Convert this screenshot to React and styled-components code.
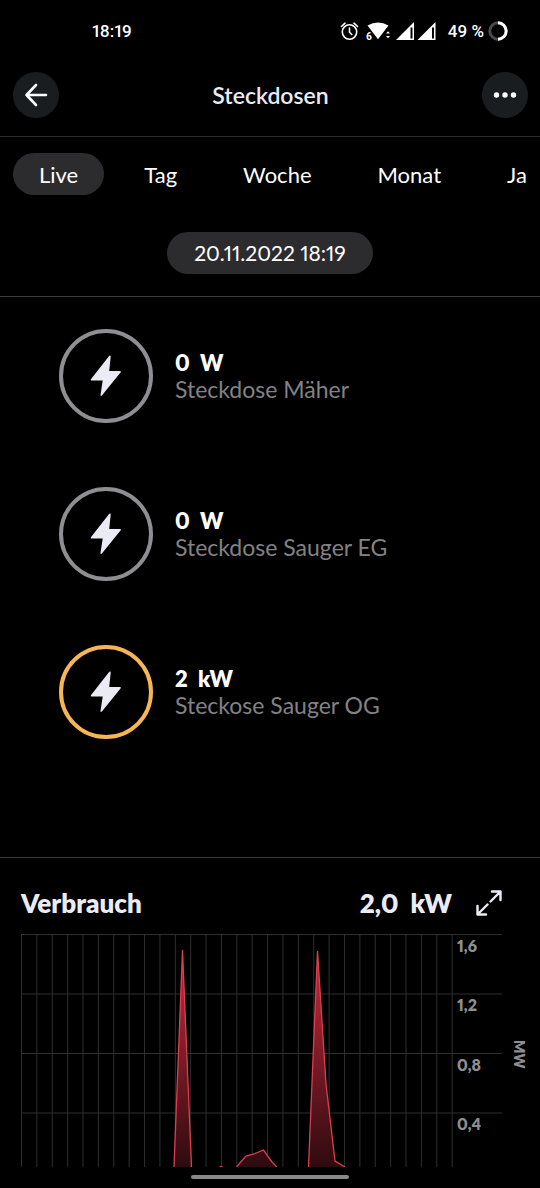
import React, { useState } from 'react';
import styled, { createGlobalStyle } from 'styled-components';

const GlobalStyle = createGlobalStyle`
  * {
    box-sizing: border-box;
  }
  body {
    margin: 0;
    background: #000;
    color: #fff;
    font-family: Lato, 'Liberation Sans', sans-serif;
    font-variant-numeric: proportional-nums;
  }
  button {
    font: inherit;
    font-variant-numeric: inherit;
    color: inherit;
    border: 0;
    padding: 0;
    background: none;
    cursor: pointer;
  }
`;

/**
 * Page
 */

const Page = styled.div`
  display: flex;
  flex-direction: column;
  min-height: 100vh;
  background: #000;
`;

const StatusBar = styled.div`
  display: flex;
  justify-content: space-between;
  align-items: center;
  height: 60px;
  padding: 1px 32px 0 92px;
  font-family: Roboto, sans-serif;
  font-size: 17px;
  font-weight: 500;
`;

const StatusIcons = styled.div`
  display: flex;
  align-items: center;
`;

const Battery = styled.span`
  margin: 0 4px 0 12px;
  white-space: nowrap;
`;

/**
 * Header
 */

const Header = styled.header`
  display: flex;
  align-items: center;
  justify-content: space-between;
  height: 77px;
  padding: 0 12px 6px 13px;
  border-bottom: 1px solid #2c2c2e;
`;

const RoundButton = styled.button`
  display: flex;
  align-items: center;
  justify-content: center;
  width: 46px;
  height: 46px;
  border-radius: 50%;
  background: #1a1d20;
`;

const Title = styled.h1`
  margin: 0;
  font-size: 23px;
  font-weight: 600;
  line-height: 28px;
  color: #ebebf5;
`;

/**
 * Range
 */

const Tabs = styled.nav`
  display: flex;
  gap: 14px;
  margin: 16px 12px 0 13px;
  overflow: hidden;
`;

const Tab = styled.button`
  flex: none;
  height: 42px;
  padding: 0 26px;
  border-radius: 21px;
  font-size: 22px;
  background: ${({ $active }) => ($active ? '#2c2c2e' : 'transparent')};
`;

const DateRow = styled.div`
  display: flex;
  justify-content: center;
  padding: 37px 0 22px;
  border-bottom: 1px solid #3a3a3c;
`;

const DateButton = styled.button`
  height: 42px;
  padding: 0 27px 1px;
  border-radius: 21px;
  font-size: 21px;
  background: #2c2c2e;
`;

/**
 * Sockets
 */

const SocketList = styled.ul`
  display: flex;
  flex-direction: column;
  gap: 64px;
  margin: 0;
  padding: 32px 20px 118px 59px;
  list-style: none;
  border-bottom: 1px solid #3a3a3c;
`;

const Socket = styled.li`
  display: flex;
  align-items: center;
  gap: 22px;
`;

const Ring = styled.div`
  display: flex;
  align-items: center;
  justify-content: center;
  width: 94px;
  height: 94px;
  border: 4px solid ${({ $on }) => ($on ? '#f7b555' : '#8e8e93')};
  border-radius: 50%;
`;

const Power = styled.div`
  font-size: 22px;
  font-weight: 800;
  line-height: 27px;
  white-space: pre;
`;

const SocketName = styled.div`
  font-size: 23px;
  line-height: 27px;
  color: #828285;
`;

/**
 * Consumption
 */

const Consumption = styled.section`
  padding: 27px 12px 0 21px;
`;

const ConsumptionHead = styled.div`
  display: flex;
  align-items: center;
  padding-right: 26px;
  color: #ebebf5;
  font-size: 26px;
  font-weight: 800;
  line-height: 36px;
`;

const ConsumptionTitle = styled.h2`
  flex: 1;
  margin: 0;
  font: inherit;
`;

const Total = styled.span`
  white-space: pre;
`;

const ExpandButton = styled.button`
  display: flex;
  margin-left: 24px;
`;

const Chart = styled.svg`
  display: block;
  width: 100%;
  margin-top: 13px;
`;

const AxisText = styled.text`
  fill: #8e8e93;
  font-family: Lato, 'Liberation Sans', sans-serif;
  font-size: ${({ $small }) => ($small ? 14 : 16)}px;
  font-weight: 800;
`;

const HomeBar = styled.div`
  width: 158px;
  height: 4px;
  margin: 8px auto 0;
  border-radius: 2px;
  background: #888;
`;

const ranges = ['Live', 'Tag', 'Woche', 'Monat', 'Ja'];

const sockets = [
  { name: 'Steckdose Mäher', power: '0  W', on: false },
  { name: 'Steckdose Sauger EG', power: '0  W', on: false },
  { name: 'Steckose Sauger OG', power: '2  kW', on: true },
];

const axis = [
  { y: 0.5, label: '1,6' },
  { y: 60, label: '1,2' },
  { y: 119.5, label: '0,8' },
  { y: 179, label: '0,4' },
];

const curves = [
  '153,233 161.5,16 170.5,233',
  '197,234 200,232.5 203,234',
  '215.5,233 225,222 233,220 242.5,216 251,228 256,233',
  '287.5,233 296.5,17 305,150 314,227 324,233',
];

function SystemIcons() {
  return (
    <svg width="96" height="22" viewBox="0 0 96 22" fill="#fff">
      <g fill="none" stroke="#fff" strokeWidth="1.6" strokeLinecap="round">
        <circle cx="9.5" cy="12" r="7.2" />
        <path d="M9.5 8v4.2l2.3 2.3M1.5 6.5 5 3.2M17.5 6.5 14 3.2" />
      </g>
      <path d="M27.5 5.5q10.5-6 21 0L38 19.3z" />
      <text x="26" y="19.5" fontFamily="Roboto, sans-serif" fontSize="10" fontWeight="700">6</text>
      <path d="m46 13.5 2-2.3 2 2.3zM46 16l2 2.3 2-2.3z" />
      <path fillRule="evenodd" d="M74 2v18H56zM70.5 7.5v11h2v-11z" />
      <path fillRule="evenodd" d="M95.5 2v18h-18zM92 7.5v11h2v-11z" />
    </svg>
  );
}

function BatteryRing() {
  return (
    <svg width="20" height="20" viewBox="0 0 20 20" fill="none" strokeWidth="3">
      <circle cx="10" cy="10" r="8.2" stroke="#4a4a4a" />
      <path d="M10 1.8a8.2 8.2 0 0 1 0 16.4" stroke="#fff" />
    </svg>
  );
}

function Bolt() {
  return (
    <svg width="32" height="42" viewBox="0 0 32 42" fill="#ebebf5">
      <path d="M19.3.8.9 24.2q-.6 1.2.8 1.2h11L10.5 40q0 1.5 1.4.6L30.7 17.3q.7-1.4-.8-1.4H19.2L20.7 1.7q0-1.7-1.4-.9z" />
    </svg>
  );
}

function ConsumptionChart() {
  return (
    <Chart viewBox="0 0 507 233" role="img" aria-label="Verbrauch">
      <defs>
        <linearGradient id="load" gradientUnits="userSpaceOnUse" x1="0" y1="16" x2="0" y2="233">
          <stop offset="0" stopColor="#c9293e" />
          <stop offset="1" stopColor="#2e0b0f" />
        </linearGradient>
      </defs>
      <g stroke="#2f2f31">
        {Array.from({ length: 29 }, (_, i) => (
          <line key={i} x1={0.5 + i * 15.38} x2={0.5 + i * 15.38} y1="0" y2="233" />
        ))}
        {axis.map(({ y }) => (
          <line key={y} x1="0" x2="481" y1={y} y2={y} />
        ))}
      </g>
      {curves.map((points) => (
        <polyline key={points} points={points} fill="url(#load)" stroke="#d8404f" strokeWidth="1.3" />
      ))}
      {axis.map(({ y, label }) => (
        <AxisText key={label} x="436" y={y + 17}>
          {label}
        </AxisText>
      ))}
      <AxisText $small transform="translate(493 106) rotate(90)">
        MW
      </AxisText>
    </Chart>
  );
}

function App() {
  const [range, setRange] = useState('Live');
  return (
    <Page>
      <GlobalStyle />
      <StatusBar>
        <span>18:19</span>
        <StatusIcons>
          <SystemIcons />
          <Battery>49 %</Battery>
          <BatteryRing />
        </StatusIcons>
      </StatusBar>
      <Header>
        <RoundButton aria-label="Zurück">
          <svg width="24" height="24" viewBox="0 0 24 24" fill="none" stroke="#fff" strokeWidth="2.6" strokeLinecap="round" strokeLinejoin="round">
            <path d="M22 12H2.5M12 2l-9.5 10 9.5 10" />
          </svg>
        </RoundButton>
        <Title>Steckdosen</Title>
        <RoundButton aria-label="Mehr">
          <svg width="24" height="6" viewBox="0 0 24 6" fill="#fff">
            <circle cx="3.5" cy="3" r="2.7" />
            <circle cx="12" cy="3" r="2.7" />
            <circle cx="20.5" cy="3" r="2.7" />
          </svg>
        </RoundButton>
      </Header>
      <Tabs>
        {ranges.map((name) => (
          <Tab key={name} $active={name === range} onClick={() => setRange(name)}>
            {name}
          </Tab>
        ))}
      </Tabs>
      <DateRow>
        <DateButton>20.11.2022 18:19</DateButton>
      </DateRow>
      <SocketList>
        {sockets.map(({ name, power, on }) => (
          <Socket key={name}>
            <Ring $on={on}>
              <Bolt />
            </Ring>
            <div>
              <Power>{power}</Power>
              <SocketName>{name}</SocketName>
            </div>
          </Socket>
        ))}
      </SocketList>
      <Consumption>
        <ConsumptionHead>
          <ConsumptionTitle>Verbrauch</ConsumptionTitle>
          <Total>2,0  kW</Total>
          <ExpandButton aria-label="Vergrößern">
            <svg width="26" height="26" viewBox="0 0 26 26" fill="none" stroke="#ebebf5" strokeWidth="2.4" strokeLinecap="round" strokeLinejoin="round">
              <path d="m14.5 11.5 10-10M16 1.500h8.500V10M11.500 14.500l-10 10M1.500 16v8.500H10" />
            </svg>
          </ExpandButton>
        </ConsumptionHead>
        <ConsumptionChart />
      </Consumption>
      <HomeBar />
    </Page>
  );
}

export default App;
